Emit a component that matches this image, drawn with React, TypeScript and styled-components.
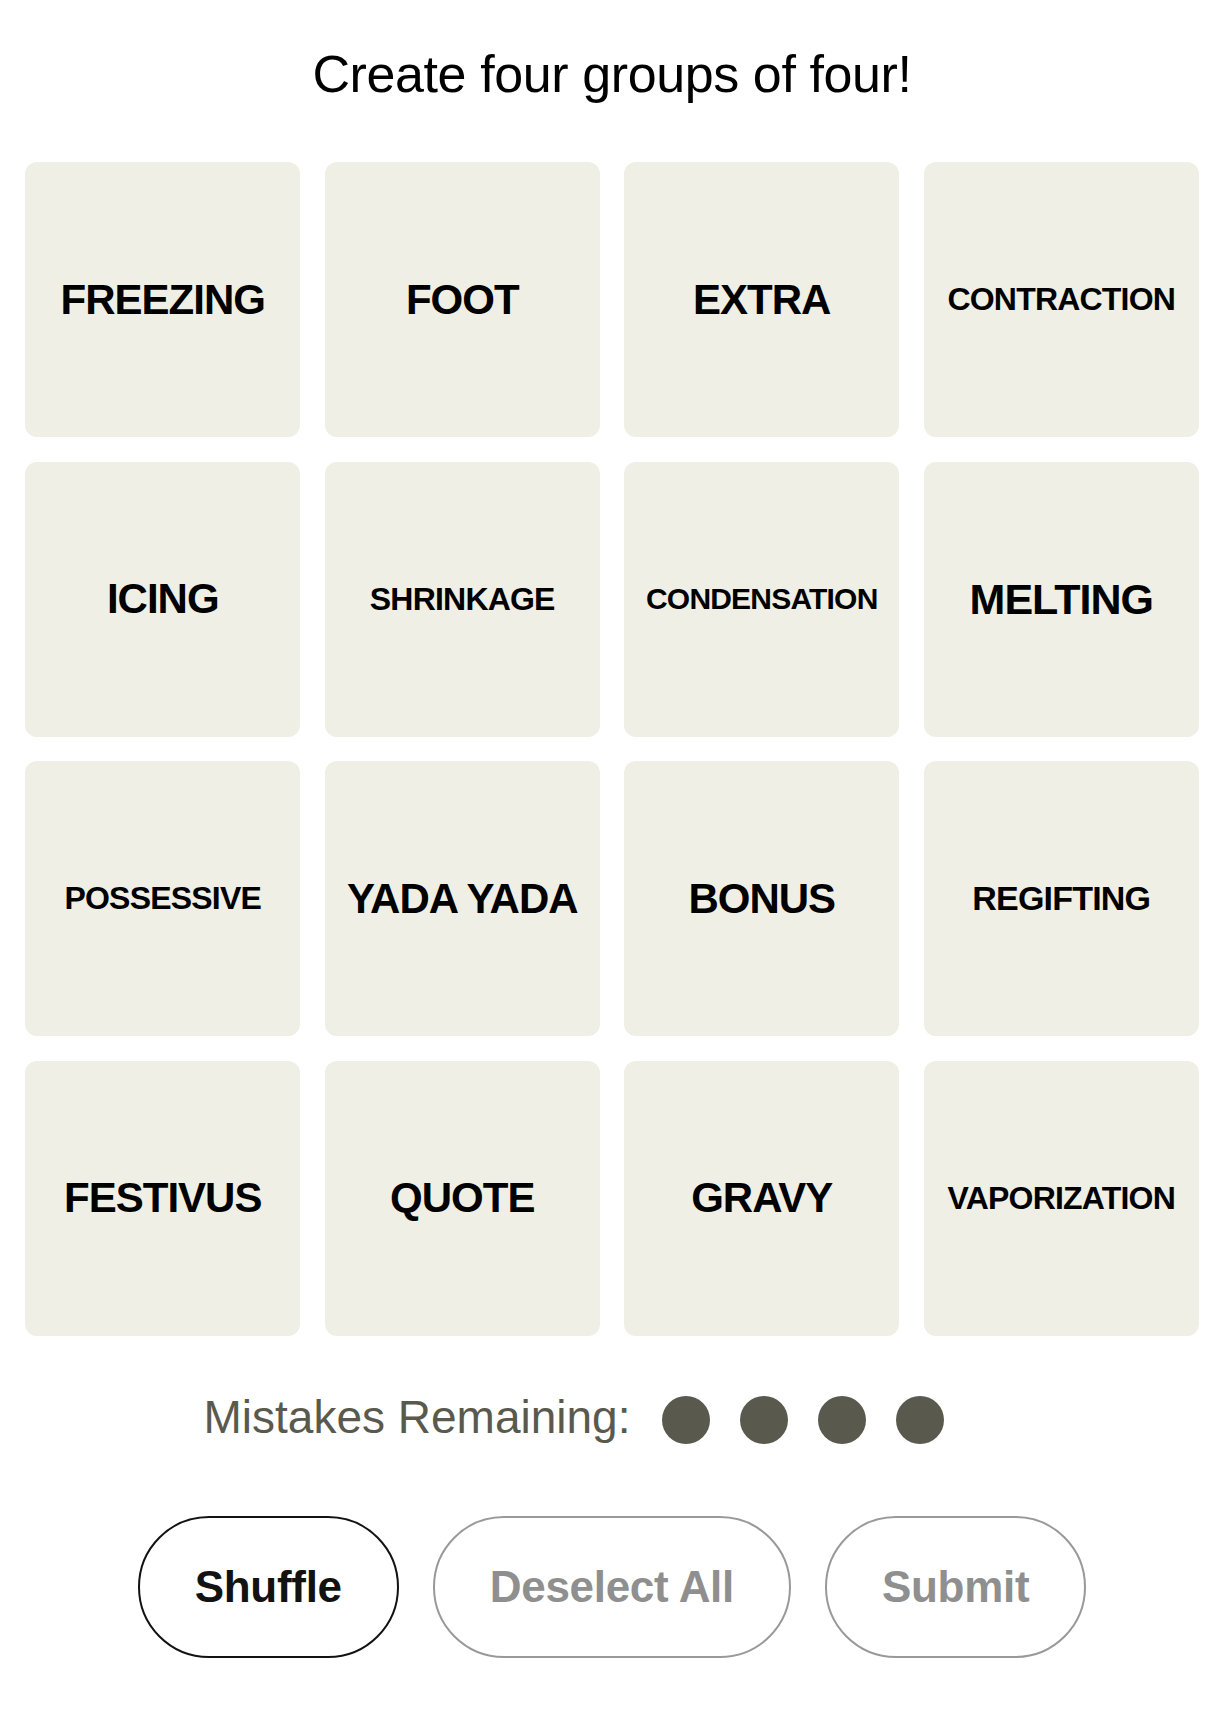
import React from "react";
import styled, { createGlobalStyle } from "styled-components";

const GlobalStyle = createGlobalStyle`
  html, body {
    margin: 0;
    padding: 0;
    background: #ffffff;
  }
  body {
    font-family: "Liberation Sans", Arial, sans-serif;
    color: #000000;
  }
`;

const Page = styled.main`
  width: 1224px;
  display: flex;
  flex-direction: column;
  align-items: center;
  padding-top: 43px;
  padding-bottom: 60px;
`;

const Title = styled.h1`
  margin: 0;
  font-size: 52px;
  line-height: 62px;
  font-weight: 400;
  letter-spacing: -0.4px;
  color: #000000;
`;

const Board = styled.div`
  margin-top: 57px;
  display: grid;
  grid-template-columns: repeat(4, 275px);
  grid-auto-rows: 275px;
  gap: 24.5px;
`;

const Tile = styled.button<{ $size: number }>`
  display: flex;
  align-items: center;
  justify-content: center;
  border: none;
  border-radius: 12px;
  background: #efefe6;
  padding: 0;
  font-family: "Liberation Sans", Arial, sans-serif;
  font-weight: 700;
  font-size: ${({ $size }) => $size}px;
  letter-spacing: ${({ $size }) => ($size > 36 ? "-1px" : "-0.8px")};
  color: #000000;
  text-transform: uppercase;
  white-space: nowrap;
  cursor: pointer;
`;

const Mistakes = styled.div`
  margin-top: 49.5px;
  height: 64px;
  display: flex;
  align-items: center;
  justify-content: center;
  gap: 32px;
`;

const MistakesLabel = styled.span`
  font-size: 46px;
  line-height: 56px;
  color: #5a594e;
`;

const Bubbles = styled.div`
  width: 358px;
  display: flex;
  gap: 30px;
  padding-top: 5px;
`;

const Bubble = styled.span`
  width: 48px;
  height: 48px;
  border-radius: 50%;
  background: #5a594e;
`;

const Controls = styled.div`
  margin-top: 67px;
  display: flex;
  gap: 34px;
`;

const Pill = styled.button<{ $active?: boolean }>`
  height: 142px;
  padding: 0 55px;
  border-radius: 999px;
  border: 2.5px solid ${({ $active }) => ($active ? "#121212" : "#999999")};
  background: #ffffff;
  color: ${({ $active }) => ($active ? "#121212" : "#8f8f8f")};
  font-family: "Liberation Sans", Arial, sans-serif;
  font-weight: 700;
  font-size: 44px;
  letter-spacing: -0.3px;
  cursor: pointer;
`;

const words: { text: string; size: number }[] = [
  { text: "FREEZING", size: 42 },
  { text: "FOOT", size: 42 },
  { text: "EXTRA", size: 42 },
  { text: "CONTRACTION", size: 32 },
  { text: "ICING", size: 42 },
  { text: "SHRINKAGE", size: 32 },
  { text: "CONDENSATION", size: 30 },
  { text: "MELTING", size: 43 },
  { text: "POSSESSIVE", size: 32 },
  { text: "YADA YADA", size: 42 },
  { text: "BONUS", size: 42 },
  { text: "REGIFTING", size: 34 },
  { text: "FESTIVUS", size: 42 },
  { text: "QUOTE", size: 42 },
  { text: "GRAVY", size: 42 },
  { text: "VAPORIZATION", size: 32 },
];

export default function App() {
  return (
    <>
      <GlobalStyle />
      <Page>
        <Title>Create four groups of four!</Title>
        <Board>
          {words.map((w) => (
            <Tile key={w.text} $size={w.size}>
              {w.text}
            </Tile>
          ))}
        </Board>
        <Mistakes>
          <MistakesLabel>Mistakes Remaining:</MistakesLabel>
          <Bubbles>
            {[0, 1, 2, 3].map((i) => (
              <Bubble key={i} />
            ))}
          </Bubbles>
        </Mistakes>
        <Controls>
          <Pill $active>Shuffle</Pill>
          <Pill>Deselect All</Pill>
          <Pill>Submit</Pill>
        </Controls>
      </Page>
    </>
  );
}
